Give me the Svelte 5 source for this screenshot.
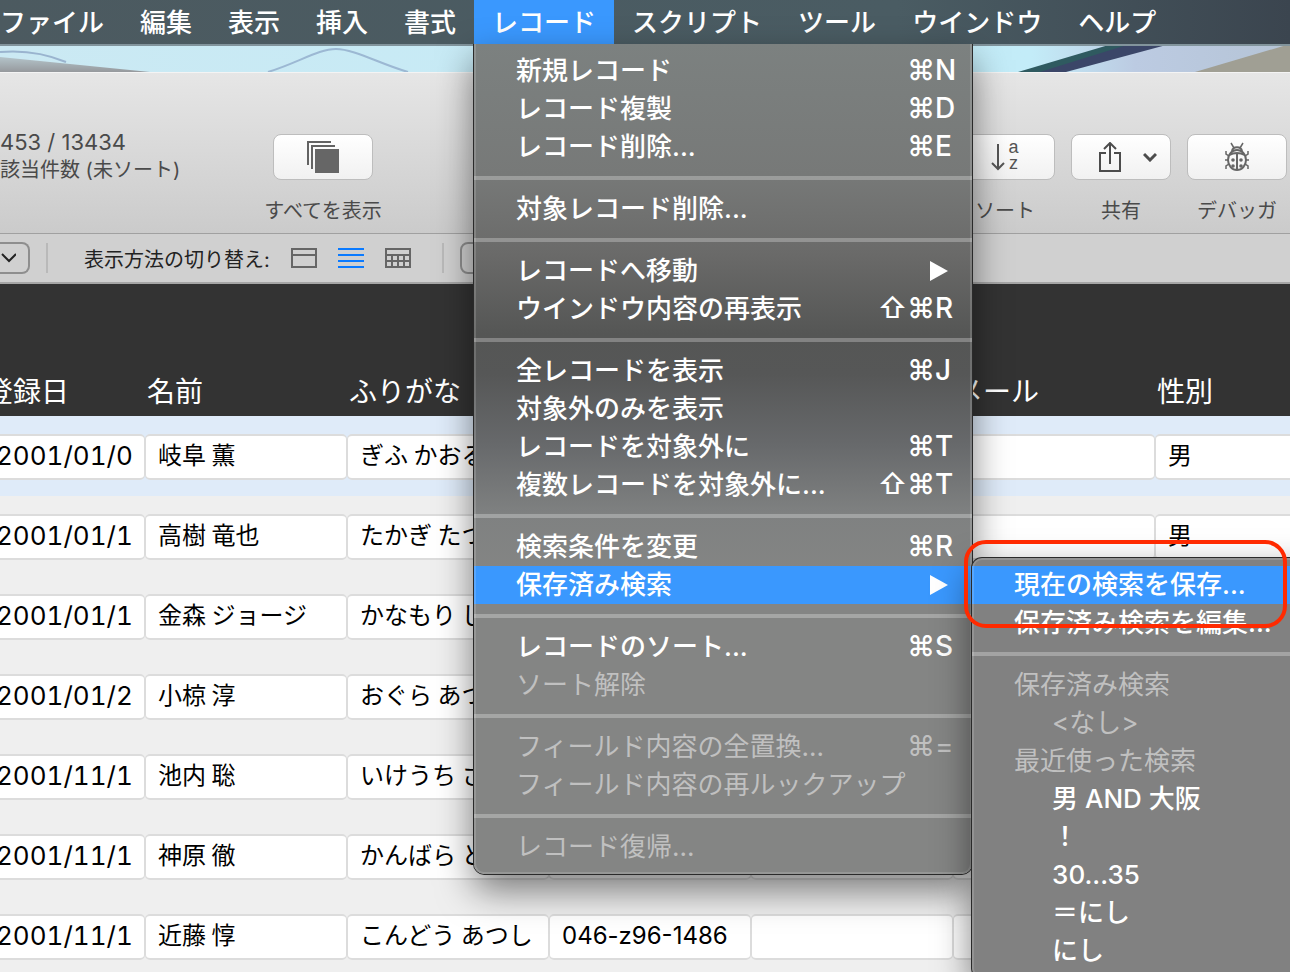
<script>
  const barLeft = ['ファイル', '編集', '表示', '挿入', '書式'];
  const barRight = ['スクリプト', 'ツール', 'ウインドウ', 'ヘルプ'];

  const recordMenu = [
    [
      { label: '新規レコード', mods: '⌘', key: 'N' },
      { label: 'レコード複製', mods: '⌘', key: 'D' },
      { label: 'レコード削除...', mods: '⌘', key: 'E' }
    ],
    [{ label: '対象レコード削除...' }],
    [
      { label: 'レコードへ移動', arrow: true },
      { label: 'ウインドウ内容の再表示', mods: '⇧⌘', key: 'R' }
    ],
    [
      { label: '全レコードを表示', mods: '⌘', key: 'J' },
      { label: '対象外のみを表示' },
      { label: 'レコードを対象外に', mods: '⌘', key: 'T' },
      { label: '複数レコードを対象外に...', mods: '⇧⌘', key: 'T' }
    ],
    [
      { label: '検索条件を変更', mods: '⌘', key: 'R' },
      { label: '保存済み検索', arrow: true, open: true }
    ],
    [
      { label: 'レコードのソート...', mods: '⌘', key: 'S' },
      { label: 'ソート解除', disabled: true }
    ],
    [
      { label: 'フィールド内容の全置換...', mods: '⌘', key: '=', disabled: true },
      { label: 'フィールド内容の再ルックアップ', disabled: true }
    ],
    [{ label: 'レコード復帰...', disabled: true }]
  ];

  const savedFinds = [
    [
      { label: '現在の検索を保存...', active: true },
      { label: '保存済み検索を編集...' }
    ],
    [
      { label: '保存済み検索', disabled: true },
      { label: '<なし>', disabled: true, indent: true },
      { label: '最近使った検索', disabled: true },
      { label: '男 AND 大阪', indent: true },
      { label: '！', indent: true },
      { label: '30...35', indent: true },
      { label: '＝にし', indent: true },
      { label: 'にし', indent: true }
    ]
  ];

  const columns = ['登録日', '名前', 'ふりがな', '', '', 'メール', '性別'];

  let records = $state([
    ['2001/01/0', '岐阜 薫', 'ぎふ かおる', '', '', '', '男'],
    ['2001/01/1', '高樹 竜也', 'たかぎ たつや', '', '', '', '男'],
    ['2001/01/1', '金森 ジョージ', 'かなもり じ', '', '', '', ''],
    ['2001/01/2', '小椋 淳', 'おぐら あつし', '', '', '', ''],
    ['2001/11/1', '池内 聡', 'いけうち さ', '', '', '', ''],
    ['2001/11/1', '神原 徹', 'かんばら と', '', '', '', ''],
    ['2001/11/1', '近藤 惇', 'こんどう あつし', '046-z96-1486', '', '', '']
  ]);
</script>

<div class="screen">
  <nav class="menubar">
    {#each barLeft as name}
      <button class="bar-item">{name}</button>
    {/each}
    <div class="bar-open">
      <button class="bar-item selected">レコード</button>
      <div class="menu">
        {#each recordMenu as group}
          <ul>
            {#each group as item}
              <li>
                <button class="item" class:active={item.open} disabled={item.disabled}>
                  <span class="label">{item.label}</span>
                  {#if item.key}
                    <span class="mods">{item.mods}</span><span class="key">{item.key}</span>
                  {/if}
                  {#if item.arrow}
                    <svg class="arrow" width="18" height="20" viewBox="0 0 18 20"><path d="M0 0 18 10 0 20z" fill="#fff" /></svg>
                  {/if}
                </button>
                {#if item.open}
                  <div class="menu submenu">
                    {#each savedFinds as subgroup}
                      <ul>
                        {#each subgroup as sub}
                          <li>
                            <button class="item" class:active={sub.active} class:indent={sub.indent} disabled={sub.disabled}>
                              <span class="label">{sub.label}</span>
                            </button>
                          </li>
                        {/each}
                      </ul>
                    {/each}
                    <div class="marker"></div>
                  </div>
                {/if}
              </li>
            {/each}
          </ul>
        {/each}
      </div>
    </div>
    {#each barRight as name}
      <button class="bar-item">{name}</button>
    {/each}
  </nav>

  <svg class="desktop" viewBox="0 0 1290 28" preserveAspectRatio="none">
    <defs>
      <linearGradient id="sky">
        <stop offset="0" stop-color="#cbe9f3" />
        <stop offset="0.8" stop-color="#c3ecf8" />
        <stop offset="0.88" stop-color="#bccbe2" />
        <stop offset="1" stop-color="#b5c4d6" />
      </linearGradient>
      <linearGradient id="haze" x1="0" y1="0" x2="0" y2="1">
        <stop offset="0" stop-color="#b4c4ca" />
        <stop offset="1" stop-color="#96999d" />
      </linearGradient>
    </defs>
    <rect width="1290" height="28" fill="url(#sky)" />
    <path d="M0 13 60 19 150 28H0z" fill="url(#haze)" />
    <path d="M0 8Q35 5 66 18" fill="none" stroke="#9ab4cf" stroke-width="2" />
    <path d="M268 28C300 18 318 5 336 5S380 20 408 28" fill="none" stroke="#9cb8d3" stroke-width="2" />
    <path d="M1022 28 1120 0H1170L1066 28z" fill="#3b4668" />
    <path d="M1018 28 1112 0H1130L1040 28z" fill="#2f5a60" />
    <path d="M1195 28 1290 0V28z" fill="#a09f94" />
    <rect width="1290" height="2" fill="#82949c" />
  </svg>

  <main>
    <header class="toolbar">
      <div class="status">
        <span class="count">453 / 13434</span>
        <span>該当件数 (未ソート)</span>
      </div>
      <div class="tool">
        <button aria-label="すべてを表示">
          <svg width="32" height="32" viewBox="0 0 32 32">
            <path d="M1 24V1H24M5 28V5H28" fill="none" stroke="#636363" stroke-width="2" />
            <rect x="8" y="8" width="24" height="24" fill="#666" />
          </svg>
        </button>
        <span>すべてを表示</span>
      </div>
      <div class="tool right">
        <button class="sort" aria-label="ソート">
          <svg width="14" height="28" viewBox="0 0 14 28">
            <path d="M7 1V26M1 20 7 26 13 20" fill="none" stroke="#555" stroke-width="2" />
          </svg>
          <span class="az"><span>a</span><span>z</span></span>
        </button>
        <span>ソート</span>
      </div>
      <div class="tool">
        <button class="share" aria-label="共有">
          <svg width="24" height="30" viewBox="0 0 24 30">
            <path d="M8 11H2V29H22V11H16M12 22V2M6 7 12 1 18 7" fill="none" stroke="#4c4c4c" stroke-width="2" />
          </svg>
          <svg width="14" height="10" viewBox="0 0 14 10">
            <path d="M1 2 7 8 13 2" fill="none" stroke="#4c4c4c" stroke-width="3" />
          </svg>
        </button>
        <span>共有</span>
      </div>
      <div class="tool">
        <button aria-label="デバッガ">
          <svg width="24" height="30" viewBox="0 0 24 30" fill="none" stroke="#666" stroke-width="2">
            <ellipse cx="12" cy="18" rx="9" ry="10" />
            <path d="M7 9C8 4 16 4 17 9M12 12V28M4 13Q12 9 20 13" />
            <path d="M9 6 6 1M15 6 18 1M4 14 1 12V9M20 14 23 12V9M3 18H0M21 18H24M4 22 1 24V27M20 22 23 24V27" stroke-width="1.5" />
            <g fill="#666" stroke="none">
              <circle cx="8" cy="18" r="1.8" />
              <circle cx="16" cy="18" r="1.8" />
              <circle cx="8" cy="24" r="1.8" />
              <circle cx="16" cy="24" r="1.8" />
            </g>
          </svg>
        </button>
        <span>デバッガ</span>
      </div>
    </header>

    <div class="viewbar">
      <button class="popup" aria-label="レイアウト">
        <svg width="16" height="10" viewBox="0 0 16 10"><path d="M2 1 9 8 16 1" fill="none" stroke="#222" stroke-width="2" /></svg>
      </button>
      <i class="divider"></i>
      <span class="caption">表示方法の切り替え:</span>
      <div class="modes">
        <button aria-label="フォーム">
          <svg width="26" height="20" viewBox="0 0 26 20"><path d="M1 1H25V19H1zM1 7H25" fill="none" stroke="#666" stroke-width="2" /></svg>
        </button>
        <button aria-label="リスト">
          <svg width="26" height="20" viewBox="0 0 26 20"><path d="M0 1H26M0 7H26M0 13H26M0 19H26" stroke="#0a7aff" stroke-width="2" /></svg>
        </button>
        <button aria-label="表">
          <svg width="26" height="20" viewBox="0 0 26 20"><path d="M1 1H25V19H1zM1 7H25M1 13H25M7 7V19M13 7V19M19 7V19" fill="none" stroke="#666" stroke-width="2" /></svg>
        </button>
      </div>
      <i class="divider"></i>
      <button class="preview" aria-label="プレビュー"></button>
    </div>

    <table>
      <colgroup>
        <col class="date" />
        {#each columns.slice(1, -1) as _}
          <col class="field" />
        {/each}
        <col />
      </colgroup>
      <thead>
        <tr>
          {#each columns as column}
            <th>{column}</th>
          {/each}
        </tr>
      </thead>
      <tbody>
        {#each records as record, r}
          <tr class:current={r === 0}>
            {#each record as value, c}
              <td><input type="text" class:day={c === 0} class:tel={c === 3} aria-label={columns[c] || 'フィールド'} bind:value={record[c]} /></td>
            {/each}
          </tr>
        {/each}
      </tbody>
    </table>
  </main>
</div>

<style>
  :global(body) {
    margin: 0;
    background: #efefef;
  }

  .screen {
    height: 100vh;
    overflow: hidden;
    font-family: Inter, 'Noto Sans CJK JP', sans-serif;
  }

  button {
    margin: 0;
    padding: 0;
    border: none;
    background: none;
    color: inherit;
    font: inherit;
  }

  svg {
    display: block;
    flex: none;
  }

  /* menu bar */
  .menubar {
    display: flex;
    height: 44px;
    margin-left: -18px;
    background: linear-gradient(to right, #4c5a60, #4a5c63 70%, #3b454f);
    color: #fff;
    font-size: 26px;
    font-weight: 500;
  }

  .bar-item {
    height: 44px;
    padding: 2px 18px 0;
    line-height: 42px;
    white-space: nowrap;
  }

  .bar-item.selected {
    background: #3a98fe;
  }

  .bar-open {
    position: relative;
  }

  .menu {
    position: absolute;
    z-index: 1;
    top: 44px;
    left: 0;
    box-sizing: border-box;
    width: 498px;
    padding: 8px 0;
    border-radius: 0 0 10px 10px;
    background: linear-gradient(#7c8180, #777978 130px, #6a6a69 210px, #555655 290px, #565757 330px, #67696b 400px, #7f8181 470px, #848584 530px);
    box-shadow: -1px 0 #2a2a2a, 1px 0 #2a2a2a, 0 1px #2a2a2a, 0 16px 36px rgba(0, 0, 0, 0.5);
  }

  .menu::after {
    content: '';
    position: absolute;
    inset: 0;
    border: 2px solid rgba(255, 255, 255, 0.15);
    border-top: none;
    border-radius: 0 0 10px 10px;
    pointer-events: none;
  }

  .submenu {
    z-index: 2;
    top: -8px;
    left: 498px;
    width: 360px;
    border-radius: 10px;
    background: #818181;
    box-shadow: 0 0 0 1px #2a2a2a, 0 14px 36px rgba(0, 0, 0, 0.5);
  }

  .submenu::after {
    border-top: 2px solid rgba(255, 255, 255, 0.15);
    border-radius: 10px;
  }

  .menu ul {
    margin: 0;
    padding: 0;
    list-style: none;
  }

  .menu ul + ul {
    margin-top: 10px;
    padding-top: 10px;
    border-top: 4px solid rgba(255, 255, 255, 0.27);
  }

  .menu li {
    position: relative;
  }

  .item {
    display: flex;
    align-items: center;
    width: 100%;
    height: 38px;
    padding: 0 13px 0 42px;
    line-height: 38px;
    text-align: left;
    white-space: nowrap;
  }

  .item.indent {
    padding-left: 80px;
  }

  .item.active {
    background: #3a98fe;
  }

  .item:disabled {
    color: #c0c0c0;
    font-weight: 400;
  }

  .label {
    flex: 1;
  }

  .mods,
  .key {
    font-size: 28px;
    line-height: 36px;
    padding-bottom: 2px;
  }

  .key {
    width: 24px;
  }

  .arrow {
    margin-right: 11px;
  }

  .marker {
    position: absolute;
    z-index: 3;
    top: -18px;
    left: -8px;
    box-sizing: border-box;
    width: 323px;
    height: 88px;
    border: 4px solid #ff2a00;
    border-radius: 22px;
    pointer-events: none;
  }

  .desktop {
    width: 100%;
    height: 28px;
  }

  /* window toolbar */
  .toolbar {
    display: flex;
    align-items: flex-start;
    gap: 16px;
    box-sizing: border-box;
    height: 162px;
    padding: 61px 3px 0 0;
    border-top: 1px solid #f4f4f4;
    border-bottom: 1px solid #a0a0a0;
    background: linear-gradient(#e6e6e6, #cbcbcb);
    color: #4a4a4a;
    font-size: 20px;
    line-height: 28px;
  }

  .status {
    display: flex;
    flex-direction: column;
    width: 257px;
    margin-top: -6px;
  }

  .count {
    font-size: 22px;
  }

  .tool {
    display: flex;
    flex-direction: column;
    align-items: center;
    gap: 17px;
    width: 100px;
    white-space: nowrap;
  }

  .tool.right {
    margin-left: auto;
  }

  .tool button {
    display: flex;
    align-items: center;
    justify-content: center;
    box-sizing: border-box;
    width: 100px;
    height: 46px;
    border: 1px solid #bdbdbd;
    border-radius: 8px;
    background: linear-gradient(#fff, #f1f1f1);
  }

  .tool .sort {
    gap: 3px;
  }

  .tool .share {
    gap: 21px;
    padding-left: 12px;
  }

  .az {
    display: flex;
    flex-direction: column;
    padding-bottom: 4px;
    color: #555;
    font-family: 'Liberation Sans', sans-serif;
    font-size: 18px;
    line-height: 16px;
  }

  .viewbar {
    display: flex;
    align-items: center;
    height: 48px;
    border-bottom: 2px solid #a6a6a6;
    background: #d0d0d0;
    color: #222;
    font-size: 20px;
  }

  .popup {
    display: flex;
    align-items: center;
    box-sizing: border-box;
    width: 30px;
    height: 32px;
    border: 2px solid #8e8e8e;
    border-left: none;
    border-radius: 0 8px 8px 0;
  }

  .divider {
    width: 2px;
    height: 30px;
    margin-left: 16px;
    background: #b9b9b9;
  }

  .caption {
    width: 190px;
    margin-left: 36px;
    white-space: nowrap;
  }

  .modes {
    display: flex;
    gap: 21px;
    margin: 0 15px 0 17px;
  }

  .preview {
    box-sizing: border-box;
    width: 100px;
    height: 32px;
    margin-left: 16px;
    border: 2px solid #8e8e8e;
    border-radius: 8px;
  }

  /* record list */
  table {
    width: calc(100% + 84px);
    margin-left: -17px;
    border-collapse: collapse;
    table-layout: fixed;
  }

  .date {
    width: 162px;
  }

  .field {
    width: 202px;
  }

  th {
    height: 132px;
    padding: 0 0 6px 2px;
    box-sizing: border-box;
    background: #333;
    color: #fff;
    font-size: 28px;
    font-weight: 400;
    line-height: 36px;
    text-align: left;
    vertical-align: bottom;
  }

  td {
    box-sizing: border-box;
    height: 80px;
    padding: 18px 0 16px;
    background: #efefef;
    vertical-align: top;
  }

  .current td {
    background: #dfebf9;
  }

  input {
    display: block;
    box-sizing: border-box;
    width: 100%;
    height: 46px;
    padding: 0 12px 7px;
    border: solid #dcdcdc;
    border-width: 2px 1px;
    border-radius: 5px;
    background: #fff;
    color: #000;
    font-family: 'Noto Sans CJK JP', sans-serif;
    font-size: 24px;
    outline: none;
  }

  .day,
  .tel {
    padding-bottom: 4px;
    font-family: Inter, sans-serif;
  }

  .day {
    font-size: 26px;
    font-feature-settings: 'tnum';
  }
</style>
